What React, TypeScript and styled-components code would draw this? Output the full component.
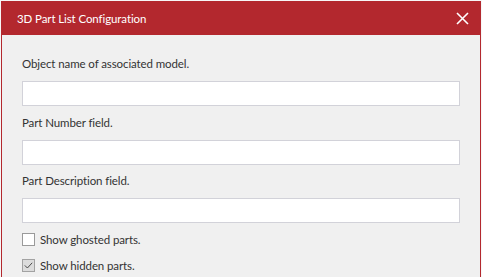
import React, { useState } from "react";
import styled, { createGlobalStyle } from "styled-components";

const GlobalStyle = createGlobalStyle`
  html, body {
    margin: 0;
    padding: 0;
    background: #ffffff;
    overflow: hidden;
  }
  * {
    box-sizing: border-box;
  }
`;

const Page = styled.div`
  padding: 1px 1px 0 1px;
  height: 277px;
  overflow: hidden;
  background: #f7f7f7;
  font-family: Lato, "Noto Sans", sans-serif;
`;

const Dialog = styled.div`
  width: 480px;
  height: 300px;
  border: 1px solid #b3282e;
  background: #f0f0f0;
  display: flex;
  flex-direction: column;
`;

const Header = styled.div`
  height: 33px;
  flex-shrink: 0;
  background: #b3282e;
  display: flex;
  align-items: center;
  justify-content: space-between;
  padding: 0 10px 0 15px;
`;

const Title = styled.span`
  color: #ffffff;
  font-size: 11.5px;
  letter-spacing: -0.1px;
`;

const CloseButton = styled.button`
  width: 16px;
  height: 16px;
  padding: 0;
  border: none;
  background: transparent;
  display: flex;
  align-items: center;
  justify-content: center;
  cursor: pointer;
`;

const Body = styled.div`
  padding: 21px 20px 0 20px;
  display: flex;
  flex-direction: column;
`;

const Field = styled.div`
  display: flex;
  flex-direction: column;
  margin-bottom: 8.5px;
`;

const Label = styled.label`
  font-size: 11.5px;
  line-height: 16px;
  color: #333333;
  margin-bottom: 9px;
  letter-spacing: -0.1px;
`;

const TextInput = styled.input`
  height: 25px;
  width: 100%;
  border: 1px solid #d2d2d9;
  background: #ffffff;
  outline: none;
  font-family: inherit;
  font-size: 12px;
  padding: 0 6px;
`;

const Checks = styled.div`
  display: flex;
  flex-direction: column;
  gap: 13px;
  padding-top: 1.5px;
`;

const CheckRow = styled.label`
  display: flex;
  align-items: center;
  gap: 5px;
  height: 13px;
  cursor: pointer;
`;

const Box = styled.span<{ $checked: boolean }>`
  width: 13px;
  height: 13px;
  border: 1px solid ${(p) => (p.$checked ? "#a2a2a2" : "#9a9a9a")};
  background: ${(p) => (p.$checked ? "#dcdcdc" : "#ffffff")};
  display: flex;
  align-items: center;
  justify-content: center;
`;

const CheckText = styled.span`
  font-size: 11.5px;
  line-height: 16px;
  color: #333333;
  letter-spacing: -0.1px;
`;

const fields = [
  "Object name of associated model.",
  "Part Number field.",
  "Part Description field.",
];

function App() {
  const [ghosted, setGhosted] = useState(false);
  const [hidden, setHidden] = useState(true);

  const checks = [
    { label: "Show ghosted parts.", value: ghosted, set: setGhosted },
    { label: "Show hidden parts.", value: hidden, set: setHidden },
  ];

  return (
    <Page>
      <GlobalStyle />
      <Dialog>
        <Header>
          <Title>3D Part List Configuration</Title>
          <CloseButton aria-label="Close">
            <svg width="13" height="13" viewBox="0 0 13 13">
              <path
                d="M1 1 L12 12 M12 1 L1 12"
                stroke="#ffffff"
                strokeWidth="1.6"
                fill="none"
              />
            </svg>
          </CloseButton>
        </Header>
        <Body>
          {fields.map((f) => (
            <Field key={f}>
              <Label>{f}</Label>
              <TextInput />
            </Field>
          ))}
          <Checks>
            {checks.map((c) => (
              <CheckRow key={c.label} onClick={() => c.set(!c.value)}>
                <Box $checked={c.value}>
                  {c.value && (
                    <svg width="9" height="7" viewBox="0 0 9 7">
                      <path
                        d="M0.8 3.4 L3.4 6 L8.2 0.8"
                        stroke="#4a4a4a"
                        strokeWidth="1"
                        fill="none"
                      />
                    </svg>
                  )}
                </Box>
                <CheckText>{c.label}</CheckText>
              </CheckRow>
            ))}
          </Checks>
        </Body>
      </Dialog>
    </Page>
  );
}

export default App;
